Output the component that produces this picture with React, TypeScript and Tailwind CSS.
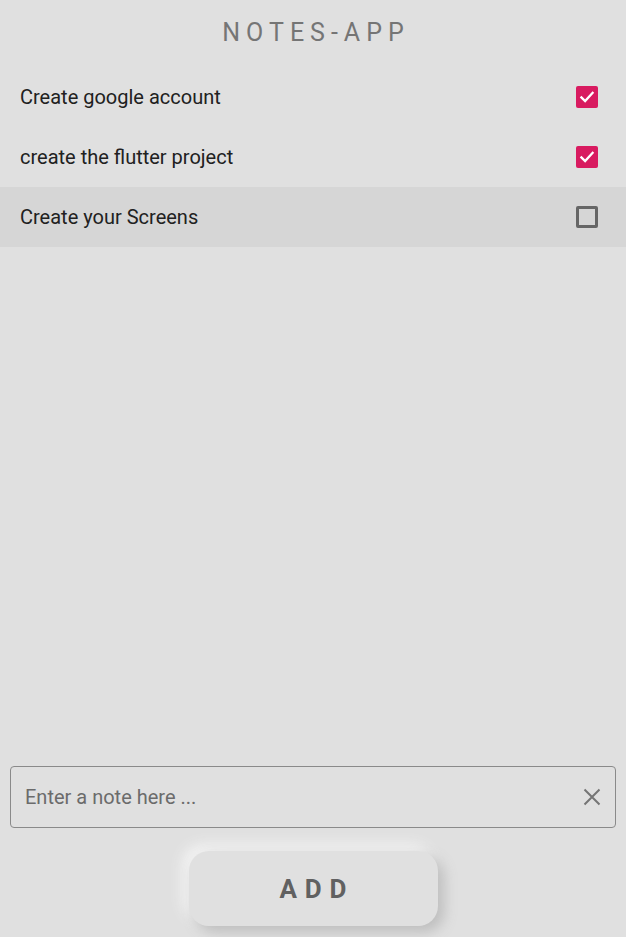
const notes = [
  { text: 'Create google account', done: true },
  { text: 'create the flutter project', done: true },
  { text: 'Create your Screens', done: false },
]

const CheckBox = ({ checked }: { checked: boolean }) => {
  if (checked) {
    return (
      <div className="flex h-[22px] w-[22px] items-center justify-center rounded-[2px] bg-[#d81b60]">
        <svg width="18" height="18" viewBox="0 0 24 24" fill="none">
          <path d="M4.5 12.5l5 5 10-11" stroke="#ffffff" strokeWidth="3" strokeLinecap="square" />
        </svg>
      </div>
    )
  }
  return <div className="h-[22px] w-[22px] rounded-[2px] border-[3px] border-[#666666]" />
}

export default function App() {
  return (
    <div
      className="flex h-screen w-full flex-col bg-[#e0e0e0]"
      style={{ fontFamily: 'Roboto, "Noto Sans", sans-serif' }}
    >
      <div className="flex h-[67px] items-center justify-center pb-[3px]">
        <h1 className="pl-[0.24em] text-[25px] font-normal leading-none tracking-[0.24em] text-[#757575]">NOTES-APP</h1>
      </div>

      <div className="flex flex-col">
        {notes.map((note, i) => (
          <div
            key={i}
            className={
              'flex h-[60px] items-center justify-between pl-[20px] pr-[28px] ' +
              (i === 2 ? 'bg-[#d6d6d6]' : '')
            }
          >
            <span className="text-[20px] text-[#212121]">{note.text}</span>
            <CheckBox checked={note.done} />
          </div>
        ))}
      </div>

      <div className="flex-1" />

      <div className="px-[10px]">
        <div className="flex h-[62px] items-center rounded-[4px] border border-[#8a8a8a] pl-[14px] pr-[14px]">
          <input
            className="flex-1 bg-transparent text-[20px] text-[#212121] outline-none placeholder:text-[#6b6b6b]"
            placeholder="Enter a note here ..."
          />
          <svg width="18" height="18" viewBox="0 0 18 18" className="ml-2">
            <path d="M1.5 1.5l15 15M16.5 1.5l-15 15" stroke="#757575" strokeWidth="2" />
          </svg>
        </div>
      </div>

      <div className="flex justify-center pt-[23px] pb-[11px]">
        <button className="flex h-[75px] w-[249px] items-center justify-center rounded-[20px] bg-[#e0e0e0] shadow-[6px_6px_14px_#bdbdbd,-6px_-6px_14px_#f5f5f5]">
          <span className="pl-[0.3em] text-[26px] font-bold leading-none tracking-[0.3em] text-[#616161]">ADD</span>
        </button>
      </div>
    </div>
  )
}
